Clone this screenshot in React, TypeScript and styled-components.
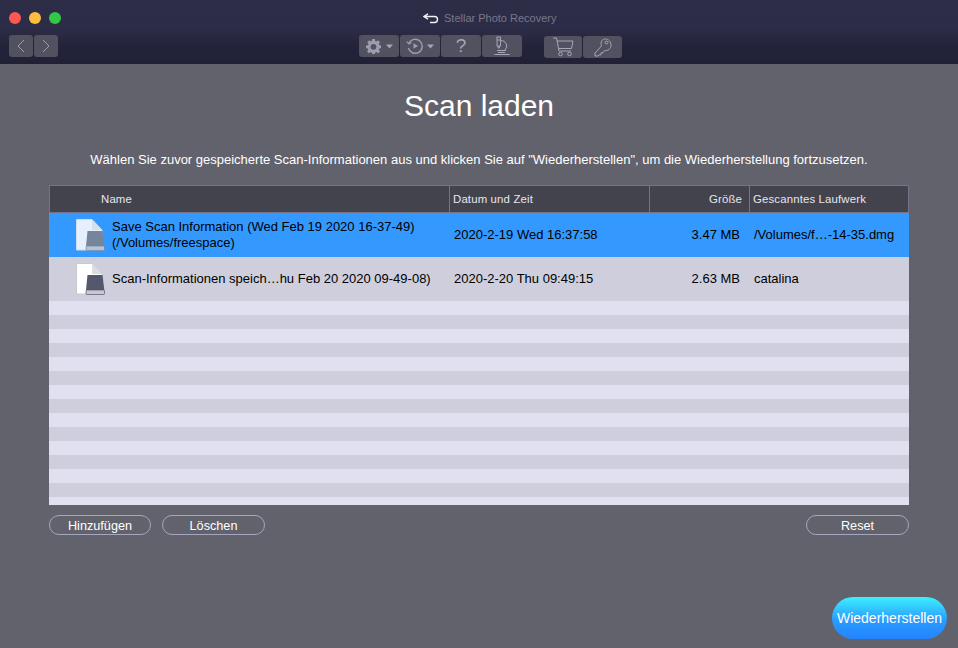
import React from "react";
import styled, { createGlobalStyle } from "styled-components";

const Global = createGlobalStyle`
  html, body { margin: 0; padding: 0; width: 958px; height: 648px; overflow: hidden; background: #62626c; }
  body { font-family: "Liberation Sans", Arial, sans-serif; }
`;

const Page = styled.div`
  width: 958px; height: 648px; display: flex; flex-direction: column; background: #62626c;
`;
const TitleBar = styled.header`
  height: 64px; flex: none; box-sizing: border-box; padding-top: 8px;
  background: linear-gradient(#2d2d48, #2c2c46 45%, #22223a 75%, #212136);
  display: flex; flex-direction: column;
`;
const TopRow = styled.div`
  height: 20px; display: flex; align-items: center; position: relative; padding-left: 9px;
`;
const Lights = styled.div`display: flex; gap: 8px;`;
const Light = styled.span<{ $c: string }>`
  width: 12px; height: 12px; border-radius: 50%; background: ${p => p.$c};
`;
const WindowTitle = styled.div`
  position: absolute; left: 423px; top: 2px; display: flex; align-items: center; gap: 5px;
  font-size: 11px; color: #78788c; height: 16px;
`;
const ToolRow = styled.div`
  height: 22px; margin-top: 7px; display: flex; padding-left: 9px;
`;
const NavGroup = styled.div`display: flex; gap: 1px; width: 350px;`;
const ToolGroup = styled.div<{ $ml?: number; $mt?: number }>`
  display: flex; gap: 1px; margin-left: ${p => p.$ml ?? 0}px; margin-top: ${p => p.$mt ?? 0}px;
`;
const ToolBtn = styled.div<{ $w: number }>`
  width: ${p => p.$w}px; height: 22px; border-radius: 3px; background: #51515f;
  display: flex; align-items: center; justify-content: center; color: #9d9db2;
`;
const IconPair = styled.span<{ $gap: number }>`
  display: flex; align-items: center; gap: ${p => p.$gap}px;
`;
const QMark = styled.span`
  font-size: 19px; color: #a5a5b8; line-height: 22px;
`;
const Main = styled.main`
  flex: 1; display: flex; flex-direction: column; position: relative;
`;
const Title = styled.h1`
  margin: 24px 0 0; height: 36px; line-height: 36px; text-align: center; color: #fff;
  font-size: 30px; font-weight: 400;
`;
const Sub = styled.p`
  margin: 28px 0 0; height: 16px; line-height: 16px; text-align: center; color: #fff; font-size: 13px;
`;
const Table = styled.div`
  margin: 17px 0 0 49px; width: 860px; height: 320px; display: flex; flex-direction: column;
  background: repeating-linear-gradient(#e0e0f0 0 14px, #cecedd 14px 28px);
  background-position: 0 116px; color: #000;
`;
const Head = styled.div`
  display: grid; grid-template-columns: 401px 200px 100px 159px; height: 28px; flex: none;
`;
const HeadCell = styled.div<{ $right?: boolean; $pad?: number }>`
  box-sizing: border-box; background: #43434e; color: #e6e6ee; font-size: 11.4px; letter-spacing: .15px;
  display: flex; align-items: center; height: 28px;
  border: 1px solid #73738a; border-left: none;
  &:first-child { border-left: 1px solid #73738a; }
  padding-left: ${p => p.$pad ?? 3}px; padding-right: 7px;
  justify-content: ${p => p.$right ? "flex-end" : "flex-start"};
`;
const Row = styled.div<{ $sel?: boolean }>`
  display: grid; grid-template-columns: 400px 200px 100px 160px; height: 44px; flex: none;
  background: ${p => p.$sel ? "#3399ff" : "#cecedd"};
  font-size: 13px;
`;
const NameCell = styled.div`
  display: flex; align-items: center; padding-left: 26px; gap: 7px; line-height: 16px; white-space: nowrap;
`;
const Cell = styled.div<{ $right?: boolean }>`
  display: flex; align-items: center; padding: 0 9px 2px 5px;
  justify-content: ${p => p.$right ? "flex-end" : "flex-start"};
  white-space: nowrap;
`;
const Buttons = styled.div`
  margin: 10px 49px 0; display: flex; gap: 11px;
`;
const Pill = styled.button<{ $w: number; $push?: boolean }>`
  width: ${p => p.$w}px; height: 20px; box-sizing: border-box; padding: 2px 0 0;
  border: 1px solid #a6a6c2; border-radius: 10px; background: transparent; color: #fff;
  font: 12.7px "Liberation Sans", Arial, sans-serif;
  margin-left: ${p => p.$push ? "auto" : "0"};
`;
const Recover = styled.button`
  position: absolute; right: 11px; bottom: 9px; width: 115px; height: 42px; padding: 0;
  border: none; border-radius: 21px; color: #fff; font: 14px "Liberation Sans", Arial, sans-serif;
  background: linear-gradient(#3cf0ff, #2a9cff 55%, #2383ff);
`;

const Chevron = ({ left }: { left?: boolean }) => (
  <svg width="10" height="14" viewBox="0 0 10 14" fill="none" stroke="#9d9db2" strokeWidth="1">
    <path d={left ? "M8 1 2 7l6 6" : "M2 1l6 6-6 6"} />
  </svg>
);
const Caret = () => (
  <svg width="7" height="5" viewBox="0 0 7 5" fill="#a5a5b8"><path d="M0 .5h7L3.5 4.5z" /></svg>
);
const Gear = () => (
  <svg width="15" height="15" viewBox="0 0 16 16" fill="#9d9db2">
    <path fillRule="evenodd" d="M6.600 0h2.800l.4 2.200 1.200.5L12.900 1.400l2 2-1.300 1.900.5 1.200 2.200.4v2.800l-2.200.4-.5 1.200 1.300 1.900-2 2-1.900-1.300-1.200.5-.4 2.200H6.600l-.4-2.200-1.200-.5-1.900 1.300-2-2 1.300-1.900-.5-1.200L0 9.800V7l2.200-.4.500-1.200L1.400 3.400l2-2L5 2.700l1.200-.5zM8 5.200a3.100 3.100 0 1 0 0 6.200 3.100 3.100 0 0 0 0-6.200z" />
  </svg>
);
const History = () => (
  <svg width="18" height="16" viewBox="0 0 18 16" fill="none" stroke="#9d9db2" strokeWidth="1.4">
    <path d="M3 5a7 7 0 1 1-.6 5" />
    <path d="M.8 3.600 3 6l2.600-1.600" strokeWidth="1.2" />
    <path d="M7.500 5.200v5.600L12 8z" fill="#9d9db2" stroke="none" />
  </svg>
);
const Scope = () => (
  <svg width="16" height="20" viewBox="0 0 16 20" fill="none" stroke="#a5a5b8" strokeWidth="1">
    <path d="M2.500 1h4M3 1v9h3.500V1M3 4h3.500M4 10v2h1.500v-2" />
    <path d="M7 4.500a5.500 5.500 0 0 1 4 9.500" />
    <path d="M3 14.500h9M4 16.500h7M0.500 18.500h15" />
  </svg>
);
const Cart = () => (
  <svg width="22" height="20" viewBox="0 0 22 20" fill="none" stroke="#a5a5b8" strokeWidth="1">
    <path d="M1 1h3.500l2.500 13h12" />
    <path d="M5 4h16l-1.500 7.500H6.400" />
    <circle cx="8.500" cy="17" r="1.800" />
    <circle cx="17.500" cy="17" r="1.800" />
  </svg>
);
const Key = () => (
  <svg width="18" height="20" viewBox="0 0 18 20" fill="none" stroke="#a5a5b8" strokeWidth="1">
    <path d="M7.500 9 1 16v3h3l1-1.200h2v-2h2l1.600-2.300c3 .6 6.400-1.600 6.400-5.500 0-3-2.400-6-5.500-6S6 4.500 7.500 9z" />
    <circle cx="12.500" cy="5.500" r="1.500" />
  </svg>
);
const BackArrow = () => (
  <svg width="16" height="11" viewBox="0 0 16 11" fill="none" stroke="#f2f2f6" strokeWidth="1.4">
    <path d="M5 .8 1 3.500l4 2.700" />
    <path d="M1.500 3.500h10c4 0 4 6 0 6H7" />
  </svg>
);
const FileIcon = ({ sel }: { sel?: boolean }) => (
  <svg width="30" height="32" viewBox="0 0 30 32" style={{ flex: "none" }}>
    <path d="M1.500 .5h15.500l10 10.500v20H1.500z" fill={sel ? "#e6f0fc" : "#ffffff"} stroke={sel ? "#cfdcec" : "#c9c9d2"} />
    <path d="M17 .5v10.500h10z" fill={sel ? "#d5e0ee" : "#dcdce4"} />
    <path d="M12.500 12h15l1.800 15H11z" fill={sel ? "#76849c" : "#53586d"} />
    <rect x="11" y="27" width="18.500" height="4.500" rx="1" fill={sel ? "#b4c4da" : "#c6c8d4"} stroke={sel ? "#76849c" : "#53586d"} strokeWidth=".7" />
  </svg>
);

export default function App() {
  return (
    <Page>
      <Global />
      <TitleBar>
        <TopRow>
          <Lights>
            <Light $c="#fc5753" />
            <Light $c="#fdbc40" />
            <Light $c="#33c748" />
          </Lights>
          <WindowTitle><BackArrow />Stellar Photo Recovery</WindowTitle>
        </TopRow>
        <ToolRow>
          <NavGroup>
            <ToolBtn $w={24}><Chevron left /></ToolBtn>
            <ToolBtn $w={24}><Chevron /></ToolBtn>
          </NavGroup>
          <ToolGroup>
            <ToolBtn $w={40}><IconPair $gap={5}><Gear /><Caret /></IconPair></ToolBtn>
            <ToolBtn $w={40}><IconPair $gap={3}><History /><Caret /></IconPair></ToolBtn>
            <ToolBtn $w={40}><QMark>?</QMark></ToolBtn>
            <ToolBtn $w={40}><Scope /></ToolBtn>
          </ToolGroup>
          <ToolGroup $ml={22} $mt={1}>
            <ToolBtn $w={38}><Cart /></ToolBtn>
            <ToolBtn $w={39}><Key /></ToolBtn>
          </ToolGroup>
        </ToolRow>
      </TitleBar>
      <Main>
        <Title>Scan laden</Title>
        <Sub>Wählen Sie zuvor gespeicherte Scan-Informationen aus und klicken Sie auf "Wiederherstellen", um die Wiederherstellung fortzusetzen.</Sub>
        <Table>
          <Head>
            <HeadCell $pad={51}>Name</HeadCell>
            <HeadCell>Datum und Zeit</HeadCell>
            <HeadCell $right>Größe</HeadCell>
            <HeadCell>Gescanntes Laufwerk</HeadCell>
          </Head>
          <Row $sel>
            <NameCell><FileIcon sel /><div>Save Scan Information (Wed Feb 19 2020 16-37-49)<br />(/Volumes/freespace)</div></NameCell>
            <Cell>2020-2-19 Wed 16:37:58</Cell>
            <Cell $right>3.47 MB</Cell>
            <Cell>/Volumes/f…-14-35.dmg</Cell>
          </Row>
          <Row>
            <NameCell><FileIcon /><div>Scan-Informationen speich…hu Feb 20 2020 09-49-08)</div></NameCell>
            <Cell>2020-2-20 Thu 09:49:15</Cell>
            <Cell $right>2.63 MB</Cell>
            <Cell>catalina</Cell>
          </Row>
        </Table>
        <Buttons>
          <Pill $w={102}>Hinzufügen</Pill>
          <Pill $w={103}>Löschen</Pill>
          <Pill $w={103} $push>Reset</Pill>
        </Buttons>
        <Recover>Wiederherstellen</Recover>
      </Main>
    </Page>
  );
}
